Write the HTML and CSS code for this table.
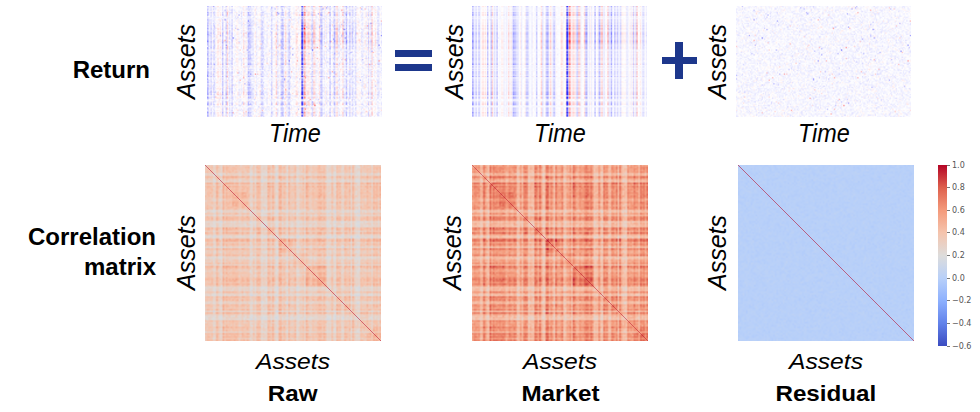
FILE: index.html
```html
<!DOCTYPE html>
<html lang="en">
<head>
<meta charset="utf-8">
<title>Return and correlation decomposition</title>
<link rel="stylesheet" href="styles.css">
</head>
<body>
<div class="figure">
  <div class="row row-top">
    <div class="rlabel rlabel-return">Return</div>
    <div class="ylab ylab-top ml-24"><span>Assets</span></div>
    <div class="col ml-8">
      <canvas class="hm hm-ret" width="175" height="111" data-kind="ret-raw"></canvas>
      <div class="xlab-time">Time</div>
    </div>
    <svg class="op op-eq ml-13" width="37" height="21" viewBox="0 0 37 21" aria-label="equals">
      <rect x="0" y="0" width="37" height="7"/>
      <rect x="0" y="14" width="37" height="7"/>
    </svg>
    <div class="ylab ylab-top ml-10"><span>Assets</span></div>
    <div class="col ml-5">
      <canvas class="hm hm-ret" width="175" height="111" data-kind="ret-market"></canvas>
      <div class="xlab-time">Time</div>
    </div>
    <svg class="op op-plus ml-15" width="35" height="37" viewBox="0 0 35 37" aria-label="plus">
      <rect x="0" y="15" width="35" height="7"/>
      <rect x="13" y="0" width="8" height="37"/>
    </svg>
    <div class="ylab ylab-top ml-8"><span>Assets</span></div>
    <div class="col ml-6">
      <canvas class="hm hm-ret" width="175" height="111" data-kind="ret-resid"></canvas>
      <div class="xlab-time">Time</div>
    </div>
  </div>

  <div class="row row-bottom">
    <div class="rlabel rlabel-corr">Correlation<br>matrix</div>
    <div class="ylab ylab-bottom ml-18"><span>Assets</span></div>
    <div class="col ml-6">
      <canvas class="hm hm-corr" width="176" height="176" data-kind="corr-raw"></canvas>
      <div class="xlab-assets">Assets</div>
      <div class="title">Raw</div>
    </div>
    <div class="ylab ylab-bottom ml-59"><span>Assets</span></div>
    <div class="col ml-7">
      <canvas class="hm hm-corr" width="176" height="176" data-kind="corr-market"></canvas>
      <div class="xlab-assets">Assets</div>
      <div class="title">Market</div>
    </div>
    <div class="ylab ylab-bottom ml-57"><span>Assets</span></div>
    <div class="col ml-8">
      <canvas class="hm hm-corr" width="176" height="176" data-kind="corr-resid"></canvas>
      <div class="xlab-assets">Assets</div>
      <div class="title">Residual</div>
    </div>
    <div class="cbar ml-24">
      <div class="cbar-grad"></div>
      <div class="ticks">
        <div class="tick">1.0</div>
        <div class="tick">0.8</div>
        <div class="tick">0.6</div>
        <div class="tick">0.4</div>
        <div class="tick">0.2</div>
        <div class="tick">0.0</div>
        <div class="tick">−0.2</div>
        <div class="tick">−0.4</div>
        <div class="tick">−0.6</div>
      </div>
    </div>
  </div>
</div>
<script src="script.js"></script>
</body>
</html>
```

FILE: styles.css
```css
html, body {
  margin: 0;
  padding: 0;
  background: #ffffff;
}

body {
  width: 980px;
  height: 412px;
  overflow: hidden;
  font-family: "Liberation Sans", Arial, sans-serif;
  color: #000000;
}

.figure {
  display: flex;
  flex-direction: column;
}

.row {
  display: flex;
  align-items: flex-start;
  box-sizing: border-box;
}

.row-top {
  height: 165px;
  padding-top: 6px;
}

.row-bottom {
  height: 247px;
}

/* row titles */
.rlabel {
  font-weight: bold;
  font-size: 24px;
  text-align: right;
  flex: none;
}

.rlabel-return {
  width: 150px;
  line-height: 24px;
  padding-top: 52px;
}

.rlabel-corr {
  width: 156px;
  line-height: 30px;
  padding-top: 57px;
}

/* rotated y labels */
.ylab {
  flex: none;
  width: 25px;
  display: flex;
  align-items: center;
  justify-content: center;
}

.ylab-top {
  height: 111px;
}

.ylab-bottom {
  height: 176px;
}

.ylab span {
  writing-mode: vertical-rl;
  transform: rotate(180deg);
  font-style: italic;
  font-size: 25px;
  line-height: 25px;
  white-space: nowrap;
}

/* heatmap columns */
.col {
  flex: none;
  display: flex;
  flex-direction: column;
  align-items: center;
}

.hm {
  display: block;
  filter: blur(0.3px);
}

.hm-ret {
  width: 175px;
  height: 111px;
}

.hm-corr {
  width: 176px;
  height: 176px;
}

.xlab-time {
  font-style: italic;
  font-size: 26px;
  line-height: 26px;
  margin-top: 3px;
  transform: scaleX(0.9);
}

.xlab-assets {
  font-style: italic;
  font-size: 22px;
  line-height: 24px;
  margin-top: 9px;
  transform: scaleX(1.12);
}

.title {
  font-weight: bold;
  font-size: 22px;
  line-height: 24px;
  margin-top: 8px;
  transform: scaleX(1.1);
}

/* operators */
.op {
  flex: none;
  display: block;
  fill: #1d378c;
}

.op-eq {
  margin-top: 44px;
}

.op-plus {
  margin-top: 36px;
}

/* colorbar */
.cbar {
  flex: none;
  display: flex;
}

.cbar-grad {
  width: 9px;
  height: 181px;
  background: linear-gradient(to top,
    rgb(59, 76, 192) 0%,
    rgb(98, 130, 234) 12.5%,
    rgb(141, 176, 254) 25%,
    rgb(184, 208, 249) 37.5%,
    rgb(221, 220, 219) 50%,
    rgb(245, 196, 173) 62.5%,
    rgb(244, 154, 123) 75%,
    rgb(222, 96, 77) 87.5%,
    rgb(180, 4, 38) 100%);
}

.ticks {
  height: 181px;
  display: flex;
  flex-direction: column;
  justify-content: space-between;
}

.tick {
  height: 0;
  display: flex;
  align-items: center;
  font-family: "DejaVu Sans", sans-serif;
  font-size: 8px;
  color: #555555;
  white-space: nowrap;
}

.tick::before {
  content: "";
  width: 3px;
  height: 1px;
  background: #777777;
  margin-right: 2px;
}

/* spacing helpers */
.ml-5 { margin-left: 5px; }
.ml-6 { margin-left: 6px; }
.ml-7 { margin-left: 7px; }
.ml-8 { margin-left: 8px; }
.ml-10 { margin-left: 10px; }
.ml-13 { margin-left: 13px; }
.ml-15 { margin-left: 15px; }
.ml-18 { margin-left: 18px; }
.ml-24 { margin-left: 24px; }
.ml-57 { margin-left: 57px; }
.ml-59 { margin-left: 59px; }
```

FILE: script.js
```js
(function () {
  function mulberry(a) {
    return function () {
      a |= 0; a = a + 0x6D2B79F5 | 0;
      var t = Math.imul(a ^ a >>> 15, 1 | a);
      t = t + Math.imul(t ^ t >>> 7, 61 | t) ^ t;
      return ((t ^ t >>> 14) >>> 0) / 4294967296;
    };
  }
  function makeGauss(r) {
    return function () {
      var u = r() || 1e-9, v = r();
      return Math.sqrt(-2 * Math.log(u)) * Math.cos(6.283185307 * v);
    };
  }
  function clamp(v, a, b) { return v < a ? a : (v > b ? b : v); }

  var CW = [[59,76,192],[98,130,234],[141,176,254],[184,208,249],[221,220,219],[245,196,173],[244,154,123],[222,96,77],[180,4,38]];
  function coolwarm(x) {
    x = clamp(x, 0, 1) * 8;
    var i = Math.min(7, Math.floor(x)), f = x - i, a = CW[i], b = CW[i + 1];
    return [a[0] + (b[0] - a[0]) * f, a[1] + (b[1] - a[1]) * f, a[2] + (b[2] - a[2]) * f];
  }
  function corrColor(v) { return coolwarm((v + 0.6) / 1.6); }
  function bwr(v) {
    v = clamp(v, -1, 1);
    if (v < 0) { var k = 1 + v; return [255 * k, 255 * k, 255]; }
    var q = 1 - v; return [255, 255 * q, 255 * q];
  }
  function mix(a, b, t) { return [a[0] + (b[0] - a[0]) * t, a[1] + (b[1] - a[1]) * t, a[2] + (b[2] - a[2]) * t]; }

  function paint(cv, w, h, colorAt) {
    var off = document.createElement("canvas");
    off.width = w; off.height = h;
    var octx = off.getContext("2d");
    var img = octx.createImageData(w, h);
    for (var y = 0; y < h; y++) {
      for (var x = 0; x < w; x++) {
        var c = colorAt(y, x);
        var p = (y * w + x) * 4;
        img.data[p] = c[0]; img.data[p + 1] = c[1]; img.data[p + 2] = c[2]; img.data[p + 3] = 255;
      }
    }
    octx.putImageData(img, 0, 0);
    var ctx = cv.getContext("2d");
    ctx.imageSmoothingEnabled = true;
    ctx.imageSmoothingQuality = "high";
    ctx.drawImage(off, 0, 0, cv.width, cv.height);
    return ctx;
  }

  /* ---------- return data ---------- */
  var T = 150, N = 92;
  var r = mulberry(12345), g = makeGauss(r);
  var f = [], beta = [], eps = [];
  for (var t = 0; t < T; t++) {
    var v = g() * 0.12;
    if (r() < 0.12) v = (r() < 0.55 ? 1 : -1) * (0.25 + 0.2 * r());
    f.push(v);
  }
  f[0] = -0.5; f[1] = -0.3; f[3] = -0.35; f[6] = -0.25;
  f[81] = -1.7; f[82] = -0.5; f[83] = 0.7; f[84] = 0.45; f[86] = 0.3; f[91] = 0.35; f[97] = -0.3;
  for (var i = 0; i < N; i++) {
    var b = 0.85 + 0.3 * g();
    if (r() < 0.08) b *= 0.3;
    beta.push(clamp(b, 0.05, 1.5));
    var row = [];
    for (var t2 = 0; t2 < T; t2++) {
      var e = g() * 0.05;
      if (r() < 0.025) e += g() * 0.25;
      row.push(e);
    }
    eps.push(row);
  }
  function regime(i, t) {
    return (t > 82 && i < 32) ? 1.4 : 1.0;
  }

  function drawRet(cv, kind) {
    paint(cv, T, N, function (i, t) {
      var m = beta[i] * f[t] * regime(i, t);
      var v;
      if (kind === "ret-raw") v = m * 0.5 + eps[i][t] * 0.8;
      else if (kind === "ret-market") v = m * 0.6 + eps[i][t] * 0.15;
      else v = eps[i][t] * 0.75;
      return bwr(v - 0.03);
    });
  }

  /* ---------- correlation data ---------- */
  var M = 110;
  var rc = mulberry(777), gc = makeGauss(rc);
  var bb = [], sector = [], sStrength = [];
  var s = 0, left = 0, lightRun = 0;
  for (var k = 0; k < M; k++) {
    if (left <= 0) { s++; left = 5 + Math.floor(rc() * 18); sStrength[s] = rc() * 0.07; }
    left--;
    sector.push(s);
    if (lightRun <= 0 && rc() < 0.1) lightRun = 1 + Math.floor(rc() * 2);
    var light = lightRun > 0;
    lightRun--;
    bb.push(light ? 0.4 + 0.1 * rc() : 0.65 + 0.06 * gc());
  }
  var noise = [];
  for (var a = 0; a < M; a++) { noise.push(new Array(M)); }
  for (var a2 = 0; a2 < M; a2++) {
    for (var b2 = a2; b2 < M; b2++) {
      var nz = gc();
      noise[a2][b2] = nz; noise[b2][a2] = nz;
    }
  }

  function corrValue(kind, i, j) {
    var sameS = sector[i] === sector[j] ? sStrength[sector[i]] : 0;
    if (kind === "corr-raw") return bb[i] * bb[j] * 0.95 + sameS + noise[i][j] * 0.025;
    if (kind === "corr-market") return bb[i] * bb[j] * 1.5 + sameS * 1.2 + noise[i][j] * 0.03;
    return noise[i][j] * 0.012;
  }

  function drawCorr(cv, kind) {
    var ctx = paint(cv, M, M, function (i, j) {
      var jj = (i === j) ? (j > 0 ? j - 1 : j + 1) : j;
      return corrColor(corrValue(kind, i, jj));
    });
    var W = cv.width;
    var img = ctx.getImageData(0, 0, W, W);
    var strength = kind === "corr-resid" ? 0.55 : (kind === "corr-raw" ? 0.5 : 0.45);
    var dc = corrColor(1);
    for (var d = 0; d < W; d++) {
      var p = (d * W + d) * 4;
      var c = mix([img.data[p], img.data[p + 1], img.data[p + 2]], dc, strength);
      img.data[p] = c[0]; img.data[p + 1] = c[1]; img.data[p + 2] = c[2];
    }
    ctx.putImageData(img, 0, 0);
  }

  var canvases = document.querySelectorAll("canvas[data-kind]");
  for (var n = 0; n < canvases.length; n++) {
    var kind = canvases[n].getAttribute("data-kind");
    if (kind.indexOf("ret") === 0) drawRet(canvases[n], kind);
    else drawCorr(canvases[n], kind);
  }
})();
```
